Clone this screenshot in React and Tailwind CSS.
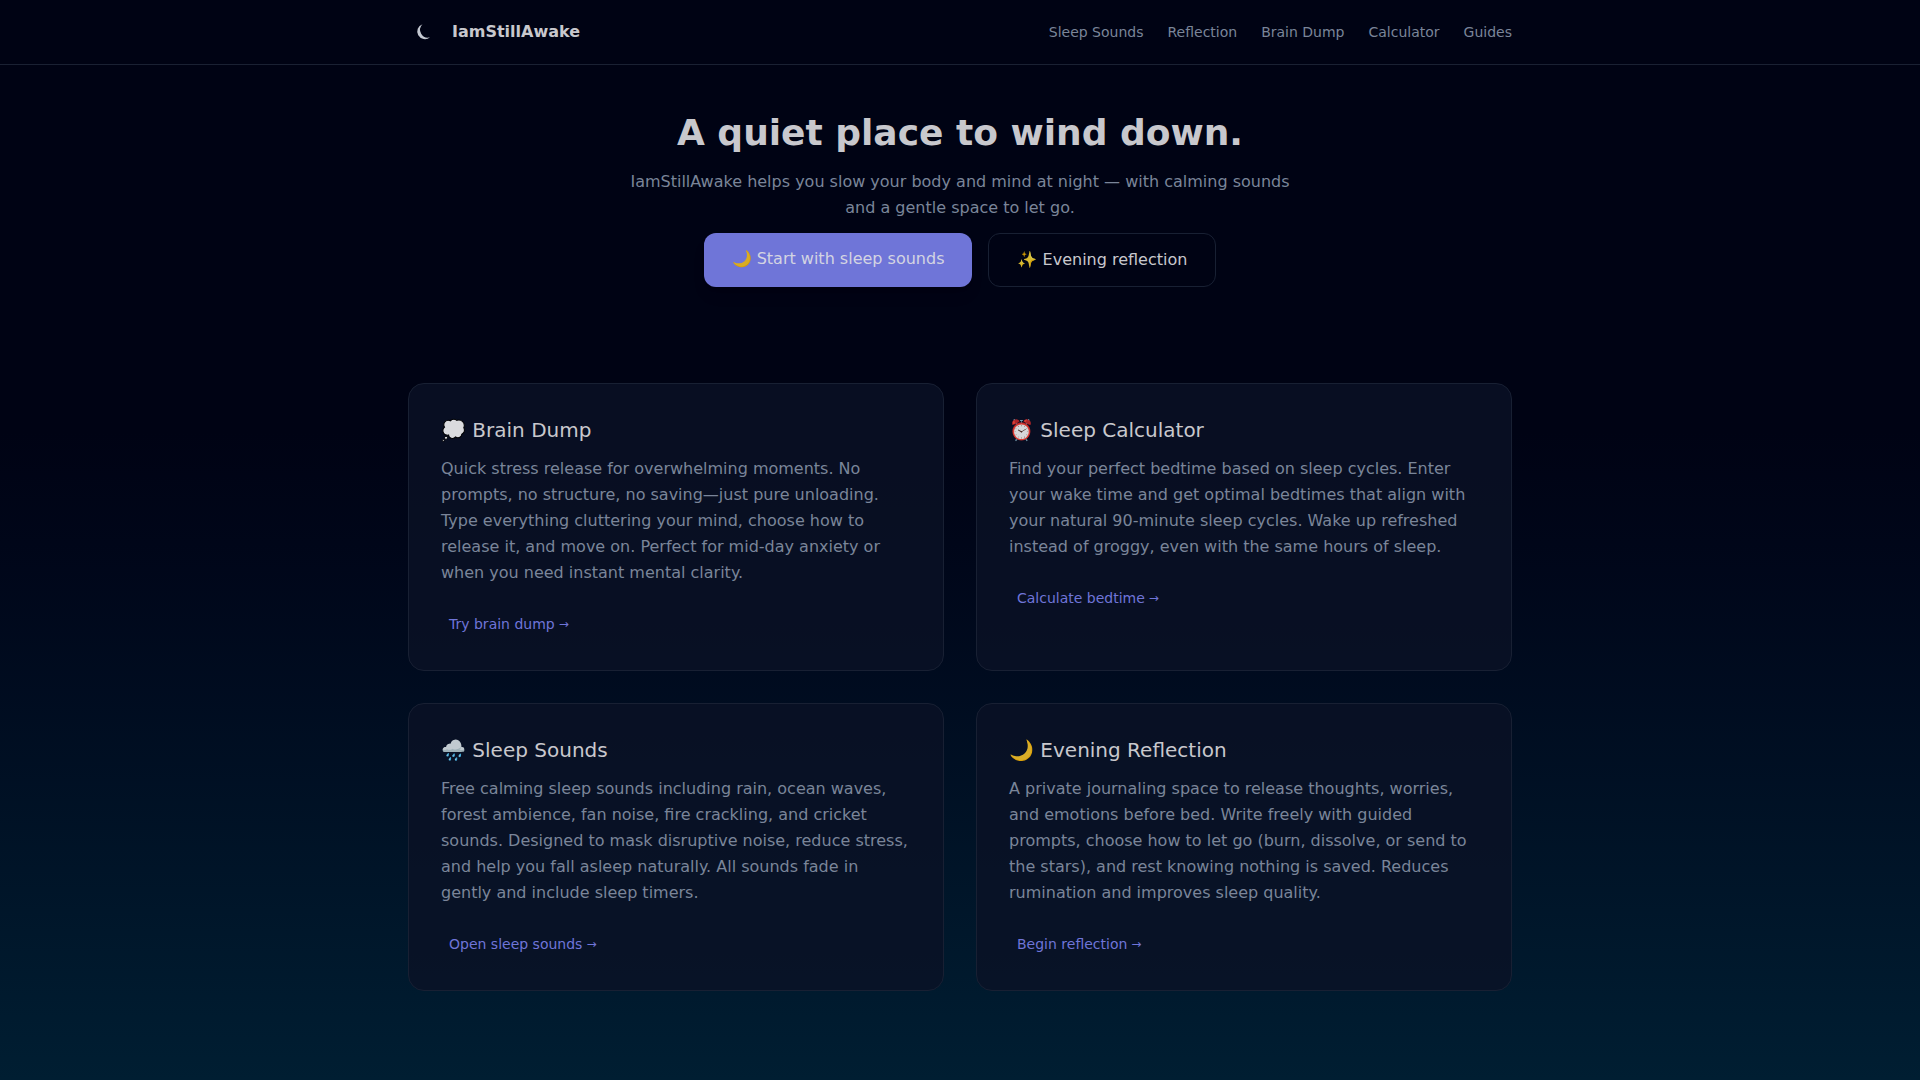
const nav = ['Sleep Sounds', 'Reflection', 'Brain Dump', 'Calculator', 'Guides']

const cards = [
  {
    icon: '💭',
    title: 'Brain Dump',
    text: 'Quick stress release for overwhelming moments. No prompts, no structure, no saving—just pure unloading. Type everything cluttering your mind, choose how to release it, and move on. Perfect for mid-day anxiety or when you need instant mental clarity.',
    link: 'Try brain dump',
  },
  {
    icon: '⏰',
    title: 'Sleep Calculator',
    text: 'Find your perfect bedtime based on sleep cycles. Enter your wake time and get optimal bedtimes that align with your natural 90-minute sleep cycles. Wake up refreshed instead of groggy, even with the same hours of sleep.',
    link: 'Calculate bedtime',
  },
  {
    icon: '🌧️',
    title: 'Sleep Sounds',
    text: 'Free calming sleep sounds including rain, ocean waves, forest ambience, fan noise, fire crackling, and cricket sounds. Designed to mask disruptive noise, reduce stress, and help you fall asleep naturally. All sounds fade in gently and include sleep timers.',
    link: 'Open sleep sounds',
  },
  {
    icon: '🌙',
    title: 'Evening Reflection',
    text: 'A private journaling space to release thoughts, worries, and emotions before bed. Write freely with guided prompts, choose how to let go (burn, dissolve, or send to the stars), and rest knowing nothing is saved. Reduces rumination and improves sleep quality.',
    link: 'Begin reflection',
  },
]

function Logo() {
  return (
    <svg viewBox="0 0 32 32" className="w-8 h-8" aria-hidden="true">
      <path d="M14.5 8.2A7.7 7.7 0 1 0 22 21.3A7.8 7.8 0 0 1 14.5 8.2z" fill="#c4c9d2" />
    </svg>
  )
}

function Header() {
  return (
    <header className="border-b border-[#1a2133]">
      <div className="max-w-[1104px] mx-auto h-16 flex items-center justify-between">
        <a href="#home" className="flex items-center gap-3 font-semibold text-[#c8c8cd]">
          <Logo />
          IamStillAwake
        </a>
        <nav className="flex gap-6 text-sm text-[#7a8599]">
          {nav.map((item) => (
            <a key={item} href="#tools">{item}</a>
          ))}
        </nav>
      </div>
    </header>
  )
}

function Card({ icon, title, text, link }) {
  return (
    <article className="p-8 rounded-2xl border border-[#182033] bg-[#0a1126]/80">
      <h2 className="text-xl leading-7 text-[#c8c8cd]">
        <span className="opacity-85">{icon}</span> {title}
      </h2>
      <p className="mt-3 leading-[26px] text-[#7a8599]">{text}</p>
      <a href="#tools" className="inline-flex items-center gap-1 mt-6 px-2 py-1 text-sm text-[#6f75d8]">
        {link} <span className="text-xs">→</span>
      </a>
    </article>
  )
}

export default function App() {
  return (
    <div className="min-h-screen bg-linear-to-b from-[#000314] from-40% to-[#001e32] font-['DejaVu_Sans',sans-serif]">
      <Header />
      <main className="max-w-[1104px] mx-auto">
        <section className="pt-12 text-center">
          <h1 className="text-4xl leading-10 font-semibold text-[#c8c8cd]">A quiet place to wind down.</h1>
          <p className="max-w-[672px] mx-auto mt-4 leading-[26px] text-[#7a8599]">
            IamStillAwake helps you slow your body and mind at night — with calming sounds and a gentle space to let go.
          </p>
          <div className="flex justify-center gap-4 mt-3 leading-[26px] text-[#c8c8cd]">
            <a href="#sounds" className="px-7 py-[13px] rounded-xl bg-[#6f75d8] text-[#d3d4e2] shadow-lg">
              <span className="inline-block brightness-85">🌙</span> Start with sleep sounds
            </a>
            <a href="#reflection" className="px-7 py-[13px] rounded-xl border border-[#182033]">
              <span className="opacity-85">✨</span> Evening reflection
            </a>
          </div>
        </section>
        <section id="tools" className="grid grid-cols-1 md:grid-cols-2 gap-8 pt-24 pb-20">
          {cards.map((card) => (
            <Card key={card.title} {...card} />
          ))}
        </section>
      </main>
    </div>
  )
}
